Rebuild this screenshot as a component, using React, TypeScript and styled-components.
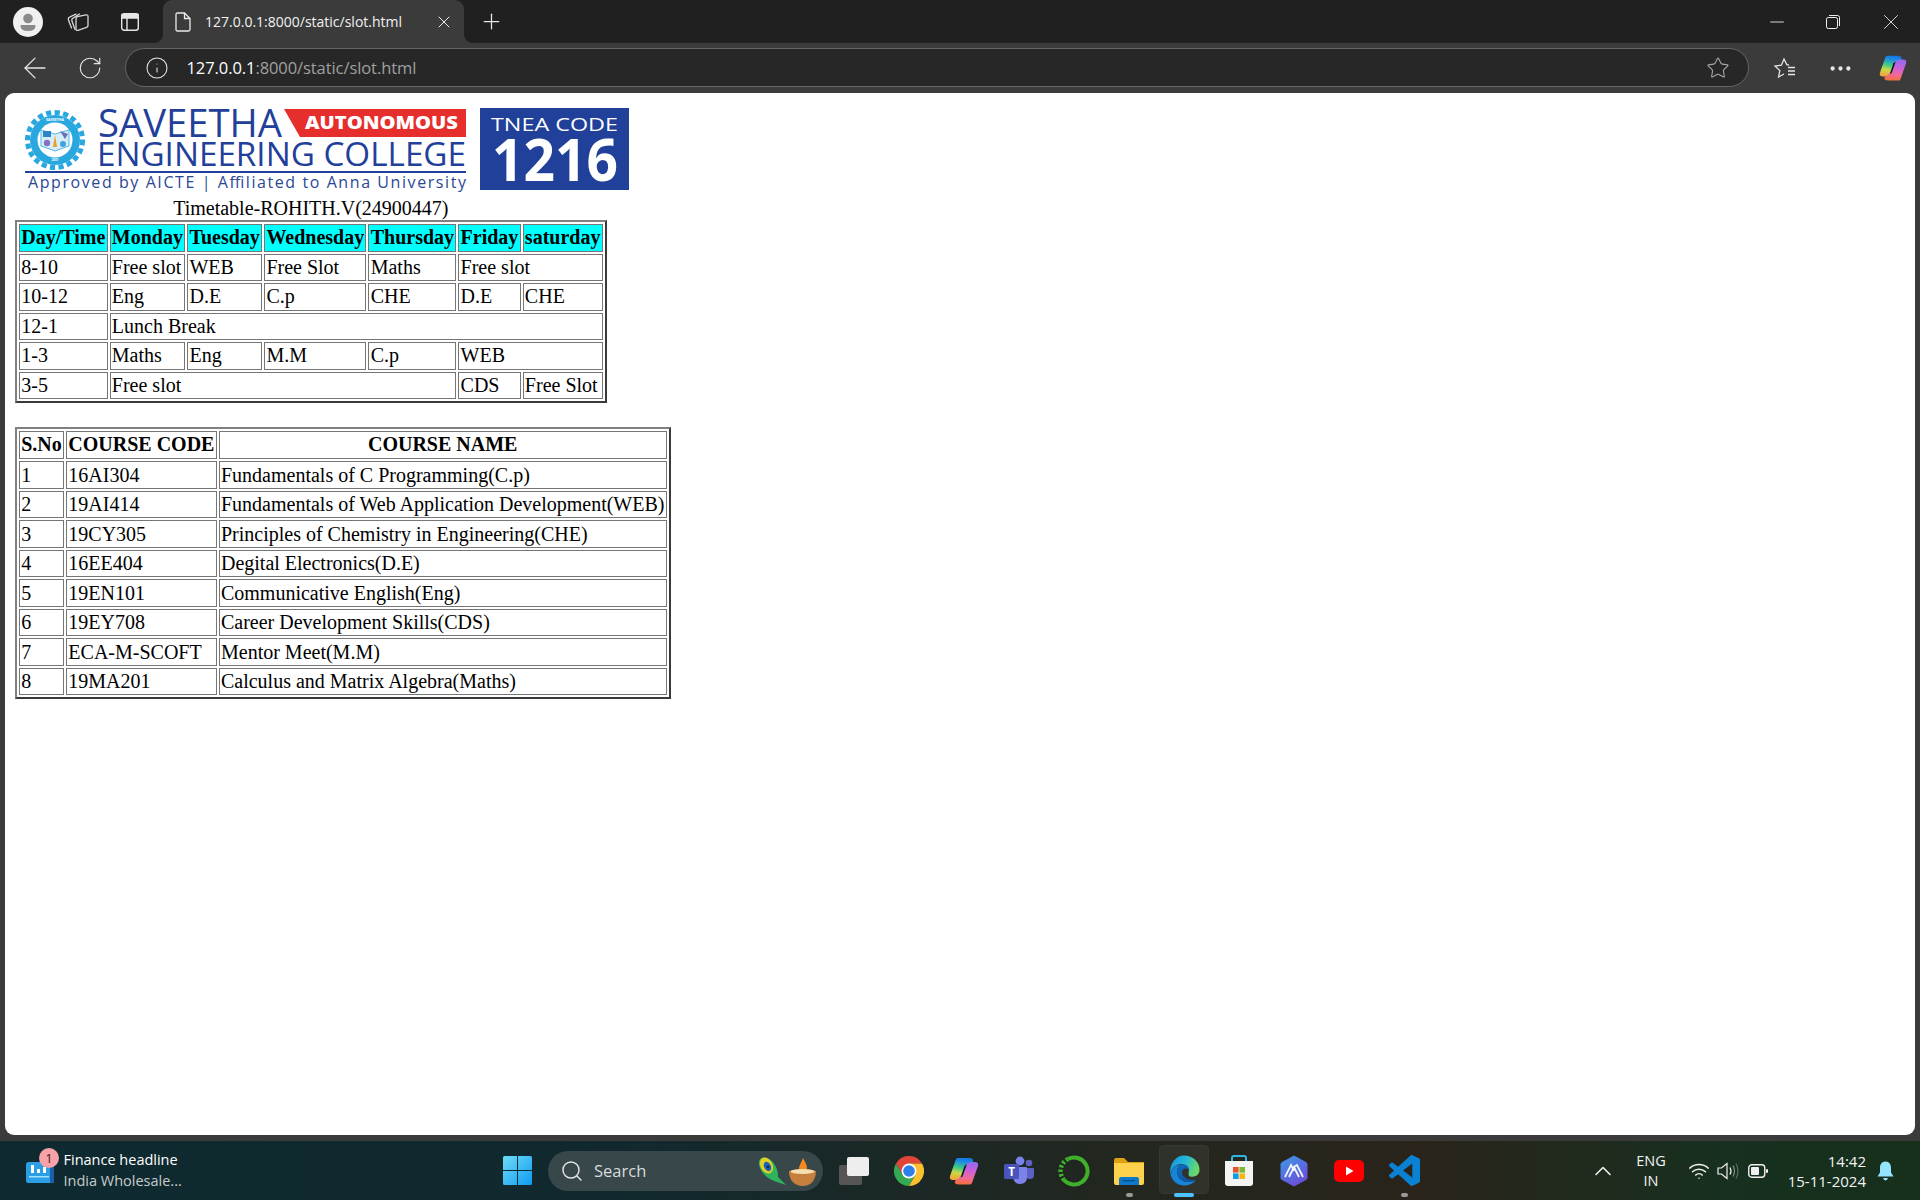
import React from "react";
import styled, { createGlobalStyle } from "styled-components";
import { ArrowLeft, ChevronUp, Info, MoreHorizontal, Minus, Plus, RotateCw, Search, Star, Wifi, X } from "lucide-react";

const Global = createGlobalStyle`
  html, body { margin: 0; padding: 0; background: #202020; overflow: hidden; }
  #root { width: 1920px; height: 1200px; }
`;

const Shell = styled.div`
  width: 1920px; height: 1200px; display: flex; flex-direction: column;
  font-family: "Open Sans", "Noto Sans", sans-serif; color: #fff;
`;
const TabStrip = styled.div`
  height: 43px; flex: none; display: flex; align-items: center; background: #202020; padding-left: 4px;
`;
const Slot = styled.div<{ $w: number; $ml?: number }>`
  width: ${(p) => p.$w}px; margin-left: ${(p) => p.$ml ?? 0}px; flex: none; height: 100%;
  display: flex; align-items: center; justify-content: center; position: relative;
`;
const Spacer = styled.div`flex: 1;`;
const Tab = styled.div`
  width: 301px; height: 43px; margin-left: 6px; flex: none; background: #3b3b3b; border-radius: 9px 9px 0 0;
  display: flex; align-items: center; padding: 0 10px 0 12px; box-sizing: border-box; position: relative;
  &::before, &::after { content: ""; position: absolute; bottom: 0; width: 8px; height: 8px; }
  &::before { left: -8px; background: radial-gradient(circle at 0 0, #202020 7.5px, #3b3b3b 8px); }
  &::after { right: -8px; background: radial-gradient(circle at 100% 0, #202020 7.5px, #3b3b3b 8px); }
`;
const TabTitle = styled.span`
  margin-left: 14px; flex: 1; font-size: 14px; color: #f2f2f2; white-space: nowrap;
`;
const Toolbar = styled.div`
  height: 50px; flex: none; display: flex; align-items: center; background: #3b3b3b; padding-left: 10px;
`;
const Address = styled.div`
  flex: 1; height: 39px; margin-left: 5px; margin-top: -1px; box-sizing: border-box; background: #272727; border: 1.5px solid #666;
  border-radius: 20px; display: flex; align-items: center; padding: 0 18px 0 19px;
`;
const Url = styled.span`
  margin-left: 17.5px; flex: 1; font-size: 16.5px; letter-spacing: -0.08px; color: #a0a0a0; white-space: nowrap;
`;
const UrlHost = styled.span`color: #fff;`;
const PageFrame = styled.div`
  flex: 1; min-height: 0; display: flex; background: #3b3b3b; padding: 0 5px 6px;
`;
const Page = styled.div`
  flex: 1; background: #fff; border-radius: 9px; overflow: hidden;
`;
const Doc = styled.div`
  zoom: 1.25; padding: 8px; color: #000; font-family: "Liberation Serif", "Times New Roman", serif; font-size: 16px;
`;
const LogoArt = styled.svg`display: block; width: 512px; height: 75.2px; overflow: visible;`;
const Table = styled.table<{ $mt?: number }>`
  border-collapse: separate; border-spacing: 2px; margin-top: ${(p) => p.$mt ?? 0}px;
  border-width: 1.6px; border-style: solid; border-color: #808080 #3a3a3a #3a3a3a #808080;
`;
const Caption = styled.caption`text-align: center;`;
const Head = styled.th<{ $fill?: boolean; $tall?: boolean }>`
  padding: 1px 1px ${(p) => (p.$tall ? 1.8 : 1)}px; border: 1px solid #767676;
  background: ${(p) => (p.$fill ? "#00ffff" : "transparent")};
  font-weight: 700; text-align: center;
`;
const Cell = styled.td`
  padding: 1px; border: 1px solid #767676;
`;
const Taskbar = styled.div`
  height: 59px; flex: none; display: flex; align-items: center;
  background: linear-gradient(90deg, #0e2a30 0%, #11292e 32%, #22271f 58%, #2a241b 74%, #17301f 90%, #16301c 100%);
`;
const WidgetArea = styled.div`
  width: 503px; flex: none; box-sizing: border-box; padding-left: 26px; display: flex; align-items: center;
`;
const WidgetIcon = styled.div`
  width: 28px; height: 21px; margin-top: 4px; position: relative; flex: none;
`;
const Badge = styled.span`
  position: absolute; left: 13px; top: -14px; width: 20px; height: 20px; border-radius: 50%; background: #f8a1a8;
  color: #3a1a1c; font-size: 13px; line-height: 20px; text-align: center;
`;
const WidgetText = styled.div`
  margin-left: 9.5px; display: flex; flex-direction: column; gap: 1px; font-size: 14.5px; line-height: 20px; white-space: nowrap;
`;
const WidgetSub = styled.span`color: #c6cccc;`;
const SearchPill = styled.div`
  width: 275px; height: 40px; margin-left: 16px; flex: none; box-sizing: border-box; border-radius: 20px; background: #37474a;
  display: flex; align-items: center; padding: 0 7px 0 12px; color: #d8dcdc; font-size: 16.5px;
`;
const SearchLabel = styled.span`margin-left: 10px; flex: 1;`;
const Apps = styled.div`
  margin-left: 3.5px; height: 100%; display: flex; flex: none;
`;
const AppSlot = styled.div<{ $active?: boolean; $open?: boolean }>`
  width: 55px; height: 100%; flex: none; display: flex; align-items: center; justify-content: center; position: relative;
  ${(p) => p.$active && `
    &::before { content: ""; position: absolute; left: 2.5px; right: 2.5px; top: 4px; bottom: 6px; background: rgba(255,255,255,.06);
      border-radius: 5px; border: 1px solid rgba(255,255,255,.03); }
    &::after { content: ""; position: absolute; left: 17.5px; width: 20px; height: 4px; bottom: 3px; border-radius: 2px; background: #4cc2ff; }
  `}
  ${(p) => p.$open && `
    &::after { content: ""; position: absolute; left: 24px; width: 7px; height: 4px; bottom: 3px; border-radius: 2px; background: #9a9a9a; }
  `}
  & > svg { position: relative; }
`;
const Tray = styled.div`
  flex: 1; height: 100%; display: flex; justify-content: flex-end; padding-right: 16px;
`;
const Lang = styled.div`
  width: 66px; flex: none; display: flex; flex-direction: column; align-items: center; justify-content: center;
  font-size: 14.5px; line-height: 20px; color: #f2f2f2;
`;
const Clock = styled.div`
  width: 93px; flex: none; display: flex; flex-direction: column; align-items: flex-end; justify-content: center;
  font-size: 15px; line-height: 20px; color: #f2f2f2; white-space: nowrap;
`;

const Logo = () => (
  <LogoArt viewBox="15 103 640 94">
    <g>
      <circle cx="55" cy="140" r="25" fill="#29a7df" />
      <circle cx="55" cy="140" r="27.5" fill="none" stroke="#29a7df" strokeWidth="5" strokeDasharray="5.2 3.4" />
      <circle cx="55" cy="140" r="17.5" fill="#fff" />
      <path d="M41 130 L55 134 L69 130 L69 146 L55 151 L41 146Z" fill="#d6eef9" stroke="#29a7df" strokeWidth=".8" />
      <rect x="43" y="131" width="8" height="6" fill="#2a84c8" />
      <circle cx="47" cy="143" r="3.2" fill="#8b6fc0" />
      <circle cx="63" cy="144" r="3" fill="#3fa2d8" />
      <path d="M55 135 L57 147 L53 147Z" fill="#e8a020" />
      <path d="M60 131 L68 134 L65 139Z" fill="#6a6fb8" />
      <text x="55" y="121.5" fontFamily="Open Sans" fontSize="3.6" fontWeight="700" fill="#fff" textAnchor="middle">SAVEETHA</text>
      <text x="55" y="161" fontFamily="Open Sans" fontSize="3" fontWeight="700" fill="#fff" textAnchor="middle">2001</text>
    </g>
    <text x="98" y="137" fontFamily="Open Sans" fontWeight="500" fontSize="39" fill="#22409a" textLength="184" lengthAdjust="spacingAndGlyphs">SAVEETHA</text>
    <polygon points="284,109 466,109 466,137 300,137" fill="#e62e2d" />
    <text x="305" y="129" fontFamily="Open Sans" fontWeight="800" fontSize="18" fill="#fff" textLength="153" lengthAdjust="spacingAndGlyphs">AUTONOMOUS</text>
    <text x="97" y="166" fontFamily="Open Sans" fontWeight="500" fontSize="32" fill="#22409a" textLength="369" lengthAdjust="spacingAndGlyphs">ENGINEERING COLLEGE</text>
    <rect x="25" y="171" width="441" height="2" fill="#22409a" />
    <text x="28" y="188" fontFamily="Open Sans" fontWeight="500" fontSize="16" fill="#2a4796" textLength="438" lengthAdjust="spacing">Approved by AICTE  |  Affiliated to Anna University</text>
    <rect x="480" y="108" width="149" height="82" fill="#20409a" />
    <text x="491" y="131" fontFamily="Open Sans" fontSize="18.5" fill="#fff" textLength="127" lengthAdjust="spacingAndGlyphs">TNEA CODE</text>
    <text x="492" y="181" fontFamily="Open Sans" fontWeight="700" fontSize="59" fill="#fff" textLength="126" lengthAdjust="spacingAndGlyphs">1216</text>
  </LogoArt>
);

const Chrome = () => (
  <svg width="30" height="30" viewBox="0 0 30 30">
    <path d="M2 7.5A15 15 0 0 1 28 7.5H15L8.5 18.75Z" fill="#e2443a" />
    <path d="M2 7.5A15 15 0 0 0 15 30L21.5 18.75H8.5Z" fill="#34a853" />
    <path d="M28 7.5A15 15 0 0 1 15 30L21.5 18.75L15 7.5Z" fill="#fbc02d" />
    <circle cx="15" cy="15" r="7.5" fill="#fff" />
    <circle cx="15" cy="15" r="5.8" fill="#2f7fe8" />
  </svg>
);
const CopilotMark = ({ id, size }: { id: string; size: number }) => (
  <svg width={size} height={size} viewBox="0 0 30 30">
    <defs>
      <linearGradient id={`${id}a`} x1="0.4" y1="1" x2="0.6" y2="0">
        <stop offset="0" stopColor="#f3a63a" /><stop offset=".3" stopColor="#c8d84a" /><stop offset=".55" stopColor="#3cc88a" /><stop offset=".85" stopColor="#1a8ae8" /><stop offset="1" stopColor="#1478e0" />
      </linearGradient>
      <linearGradient id={`${id}b`} x1="0.5" y1="1" x2="0.6" y2="0">
        <stop offset="0" stopColor="#f5703a" /><stop offset=".3" stopColor="#ee6a9e" /><stop offset=".65" stopColor="#c860dc" /><stop offset="1" stopColor="#8d6cf0" />
      </linearGradient>
    </defs>
    <path d="M9 2 H20 Q25 2 24 6 L17.5 11 L13.5 21 Q12.5 24 8 24 H4 Q0 24 1 20 L6 6 Q7 2 9 2Z" fill={`url(#${id}a)`} />
    <path d="M21 28.5 H10 Q5 28.5 6 25 L13 19.5 L17 9 Q18 6 22 6 H26 Q30 6 29 10 L24 24 Q23 28.5 21 28.5Z" fill={`url(#${id}b)`} />
    <path d="M15.5 10 L18 8 L13.5 20.5 L11.5 21.5Z" fill="#0e1a20" />
  </svg>
);
const Teams = () => (
  <svg width="30" height="30" viewBox="0 0 30 30">
    <circle cx="25" cy="7" r="3.3" fill="#5b62c4" />
    <path d="M20 12 H29 Q30 12 30 13 V19 Q30 23 26 23 Q23 23 21 21Z" fill="#5b62c4" />
    <circle cx="16" cy="5" r="4.4" fill="#7b83eb" />
    <path d="M9 11 H22 Q23 11 23 12 V21 Q23 28 16 28 Q10 28 9 21Z" fill="#7b83eb" />
    <rect x="0" y="8" width="15" height="15" rx="1.5" fill="#4b53bc" />
    <text x="7.5" y="19.5" fontFamily="Open Sans" fontSize="11.5" fontWeight="700" fill="#fff" textAnchor="middle">T</text>
  </svg>
);
const Ring = () => (
  <svg width="32" height="32" viewBox="0 0 32 32">
    <path d="M10 4 A13.5 13.5 0 1 1 6 25" fill="none" stroke="#3fb02b" strokeWidth="4" />
    <path d="M6 25 A13.5 13.5 0 0 1 10 4" fill="none" stroke="#3fb02b" strokeWidth="4.5" strokeDasharray="2.4 2" />
  </svg>
);
const Folder = () => (
  <svg width="30" height="30" viewBox="0 0 30 30">
    <path d="M0 5 Q0 2 2 2 H10 L14 6 H30 V12 H0Z" fill="#dfa20e" />
    <path d="M0 7 H30 V27 Q30 29 28 29 H2 Q0 29 0 27Z" fill="#ffd24d" />
    <path d="M5 29 V23 Q5 21 7 21 H23 Q25 21 25 23 V29Z" fill="#0f78c8" />
    <rect x="9" y="24" width="12" height="1.4" fill="#0a4f8c" />
  </svg>
);
const Edge = () => (
  <svg width="31" height="31" viewBox="0 0 31 31">
    <defs>
      <linearGradient id="edgeA" x1="0" y1="0" x2="1" y2="0.3"><stop offset="0" stopColor="#1a8fe0" /><stop offset=".55" stopColor="#23b8d8" /><stop offset="1" stopColor="#6ad96a" /></linearGradient>
      <linearGradient id="edgeB" x1="0" y1="0" x2="1" y2="1"><stop offset="0" stopColor="#0f6cc0" /><stop offset="1" stopColor="#0a4f96" /></linearGradient>
    </defs>
    <path d="M15 0.5 C24 0.5 30.5 7 30.5 15 C30.5 20 26 22.5 21 21.5 C19 21 19.5 17 20 15 C19 10 13 7.5 8 10 C3 12.5 1.5 17 2 21 C-1 12 5 0.5 15 0.5Z" fill="url(#edgeA)" />
    <path d="M2 21 C1.5 15 6 10 11.5 9.5 C8 12 7 17 9.5 22 C12 26.5 19 29 27 25 C24 29 19.5 30.5 15 30.5 C9 30.5 4 26.5 2 21Z" fill="#1684d8" />
    <path d="M11.5 9.5 C16 8.5 20 11 20 14.5 C17 12.5 13.5 13.5 13 17 C12.8 21 17 24 21 24.5 C24 24.8 26 24.5 27 25 C19 29 12 26.5 9.5 22 C7 17 8 12 11.5 9.5Z" fill="url(#edgeB)" />
  </svg>
);
const Store = () => (
  <svg width="30" height="32" viewBox="0 0 30 32">
    <path d="M8 6 V3 Q8 1 10 1 H20 Q22 1 22 3 V6" fill="none" stroke="#2ab7e8" strokeWidth="2" />
    <path d="M1 6 H29 V28 Q29 31 26 31 H4 Q1 31 1 28Z" fill="#f4f4f4" />
    <rect x="9" y="12" width="5.6" height="5.6" fill="#e8502e" />
    <rect x="15.4" y="12" width="5.6" height="5.6" fill="#7cb82f" />
    <rect x="9" y="18.4" width="5.6" height="5.6" fill="#0b9ce8" />
    <rect x="15.4" y="18.4" width="5.6" height="5.6" fill="#fab70a" />
  </svg>
);
const Hex = () => (
  <svg width="28" height="32" viewBox="0 0 28 32">
    <defs>
      <linearGradient id="hexA" x1="0" y1="0" x2="0.6" y2="1"><stop offset="0" stopColor="#3c9be8" /><stop offset="1" stopColor="#6a4fd8" /></linearGradient>
    </defs>
    <path d="M14 0.5 L26 7 Q27.5 8 27.5 9.5 V22.5 Q27.5 24 26 25 L14 31.5 L2 25 Q0.5 24 0.5 22.5 V9.5 Q0.5 8 2 7Z" fill="url(#hexA)" />
    <path d="M5 22 L11 10 L14 16 M9 22 L14 12 L19 22 M14 12 L17 10 L23 22" fill="none" stroke="#fff" strokeWidth="1.8" opacity=".92" />
  </svg>
);
const YouTube = () => (
  <svg width="30" height="22" viewBox="0 0 30 22">
    <rect width="30" height="22" rx="5" fill="#f00" />
    <path d="M12 6.5 L19.5 11 L12 15.5Z" fill="#fff" />
  </svg>
);
const VSCode = () => (
  <svg width="31" height="31" viewBox="0 0 24 24">
    <path fill="#0a82d4" d="M23.15 2.587L18.21.21a1.494 1.494 0 0 0-1.705.29l-9.46 8.63-4.12-3.128a.999.999 0 0 0-1.276.057L.327 7.261A1 1 0 0 0 .326 8.74L3.899 12 .326 15.26a1 1 0 0 0 .001 1.479L1.65 17.94a.999.999 0 0 0 1.276.057l4.12-3.128 9.46 8.63a1.492 1.492 0 0 0 1.704.29l4.942-2.377A1.5 1.5 0 0 0 24 20.06V3.939a1.5 1.5 0 0 0-.85-1.352zm-5.146 14.861L10.826 12l7.178-5.448v10.896z" />
  </svg>
);

const timetable: [string, ...[string, number?][]][] = [
  ["8-10", ["Free slot"], ["WEB"], ["Free Slot"], ["Maths"], ["Free slot", 2]],
  ["10-12", ["Eng"], ["D.E"], ["C.p"], ["CHE"], ["D.E"], ["CHE"]],
  ["12-1", ["Lunch Break", 6]],
  ["1-3", ["Maths"], ["Eng"], ["M.M"], ["C.p"], ["WEB", 2]],
  ["3-5", ["Free slot", 4], ["CDS"], ["Free Slot"]],
];
const courses = [
  ["16AI304", "Fundamentals of C Programming(C.p)"],
  ["19AI414", "Fundamentals of Web Application Development(WEB)"],
  ["19CY305", "Principles of Chemistry in Engineering(CHE)"],
  ["16EE404", "Degital Electronics(D.E)"],
  ["19EN101", "Communicative English(Eng)"],
  ["19EY708", "Career Development Skills(CDS)"],
  ["ECA-M-SCOFT", "Mentor Meet(M.M)"],
  ["19MA201", "Calculus and Matrix Algebra(Maths)"],
];
const days = ["Day/Time", "Monday", "Tuesday", "Wednesday", "Thursday", "Friday", "saturday"];

export default function App() {
  return (
    <Shell>
      <Global />
      <TabStrip>
        <Slot $w={48}>
          <svg width="30" height="30" viewBox="0 0 30 30">
            <ellipse cx="15" cy="15" rx="15" ry="15" fill="#f0f0f0" />
            <circle cx="15" cy="11.5" r="4.8" fill="#8a8a8a" />
            <path d="M7.5 18 H22.5 Q23 24 15 24 Q7 24 7.5 18Z" fill="#8a8a8a" />
          </svg>
        </Slot>
        <Slot $w={51}>
          <svg width="22" height="20" viewBox="0 0 22 20" fill="none" stroke="#d8d8d8" strokeWidth="1.3" strokeLinecap="round">
            <path d="M4.5 16 L1.3 7.5 Q1 5.5 3 4.8 L9 2.2" />
            <path d="M8 17.5 L4.8 8.5 Q4.5 6.5 6.5 5.8 L12.5 2" />
            <path d="M9 6.5 Q9 5 10.5 4.6 L19 2.8 Q21 2.6 21 4.5 V13.5 Q21 15 19.5 15.4 L11 18.4 Q9 18.8 9 17Z" />
          </svg>
        </Slot>
        <Slot $w={54}>
          <svg width="18" height="18" viewBox="0 0 18 18" fill="none" stroke="#e6e6e6" strokeWidth="1.4">
            <rect x="0.7" y="0.7" width="16.6" height="16.6" rx="2.5" />
            <path d="M1 1.5 H17 V5 H1Z" fill="#e6e6e6" />
            <path d="M6 5 V17" />
          </svg>
        </Slot>
        <Tab>
          <svg width="16" height="20" viewBox="0 0 16 20" fill="none" stroke="#ececec" strokeWidth="1.3">
            <path d="M2.5 1 H9.5 L15 6.5 V17.5 Q15 19 13.5 19 H2.5 Q1 19 1 17.5 V2.5 Q1 1 2.5 1Z" />
            <path d="M9.5 1 V6.5 H15" />
          </svg>
          <TabTitle>127.0.0.1:8000/static/slot.html</TabTitle>
          <X size={20} strokeWidth={1.2} color="#f0f0f0" />
        </Tab>
        <Slot $w={42} $ml={6}><Plus size={25} strokeWidth={1.2} color="#e8e8e8" /></Slot>
        <Spacer />
        <Slot $w={56}><Minus size={22} strokeWidth={0.95} color="#f0f0f0" /></Slot>
        <Slot $w={56}>
          <svg width="14" height="14" viewBox="0 0 14 14" fill="none" stroke="#f0f0f0" strokeWidth="1">
            <rect x="0.5" y="2.5" width="11" height="11" rx="1.8" />
            <path d="M3 0.5 H11.5 Q13.5 0.5 13.5 2.5 V11" />
          </svg>
        </Slot>
        <Slot $w={59}><X size={26} strokeWidth={0.8} color="#f0f0f0" /></Slot>
      </TabStrip>
      <Toolbar>
        <Slot $w={50}><ArrowLeft size={34} strokeWidth={0.9} color="#e6e6e6" /></Slot>
        <Slot $w={60}><RotateCw size={26} strokeWidth={1.05} color="#e6e6e6" /></Slot>
        <Address>
          <Info size={24} strokeWidth={1.05} color="#e6e6e6" />
          <Url><UrlHost>127.0.0.1</UrlHost>:8000/static/slot.html</Url>
          <Star size={24} strokeWidth={1.05} color="#a8a8a8" />
        </Address>
        <Slot $w={72}>
          <svg width="22" height="22" viewBox="0 0 22 22" fill="none" stroke="#e6e6e6" strokeWidth="1.3">
            <path d="M10 17 L4.6 20 L5.8 13.6 L1 9 L7.4 8.2 L10 2 L12.8 7.6 L15 8" />
            <path d="M14 10.5 H21 M14 14 H21 M14 17.5 H21" />
          </svg>
        </Slot>
        <Slot $w={38}><MoreHorizontal size={27} strokeWidth={1.8} color="#e6e6e6" /></Slot>
        <Slot $w={55} $ml={6}><CopilotMark id="cpTop" size={28} /></Slot>
      </Toolbar>
      <PageFrame>
        <Page>
          <Doc>
            <Logo />
            <Table>
              <Caption>Timetable-ROHITH.V(24900447)</Caption>
              <tbody>
                <tr>{days.map((d) => <Head key={d} $fill>{d}</Head>)}</tr>
                {timetable.map(([time, ...cells]) => (
                  <tr key={time}>
                    <Cell>{time}</Cell>
                    {cells.map(([text, span], i) => <Cell key={i} colSpan={span}>{text}</Cell>)}
                  </tr>
                ))}
              </tbody>
            </Table>
            <Table $mt={19}>
              <tbody>
                <tr><Head $tall>S.No</Head><Head $tall>COURSE CODE</Head><Head $tall>COURSE NAME</Head></tr>
                {courses.map(([code, name], i) => (
                  <tr key={code}><Cell>{i + 1}</Cell><Cell>{code}</Cell><Cell>{name}</Cell></tr>
                ))}
              </tbody>
            </Table>
          </Doc>
        </Page>
      </PageFrame>
      <Taskbar>
        <WidgetArea>
          <WidgetIcon>
            <svg width="28" height="21" viewBox="0 0 28 21">
              <rect width="28" height="21" rx="2.5" fill="#2a9fe6" />
              <rect x="24" y="4" width="4" height="17" fill="#1a5fa8" />
              <rect x="5" y="3" width="3" height="8" fill="#fff" />
              <rect x="11" y="7" width="3" height="4" fill="#fff" />
              <rect x="17" y="5" width="3" height="6" fill="#fff" />
              <rect x="3" y="14" width="20" height="1.5" fill="#9fe0ff" />
            </svg>
            <Badge>1</Badge>
          </WidgetIcon>
          <WidgetText>
            <span>Finance headline</span>
            <WidgetSub>India Wholesale...</WidgetSub>
          </WidgetText>
        </WidgetArea>
        <svg width="29" height="29" viewBox="0 0 29 29">
          <defs>
            <linearGradient id="winA" x1="0" y1="0" x2="1" y2="1"><stop offset="0" stopColor="#6fdcf8" /><stop offset="1" stopColor="#0e9bf0" /></linearGradient>
          </defs>
          <path d="M0 1.5 Q0 0 1.5 0 H14 V14 H0Z M15 0 H27.5 Q29 0 29 1.5 V14 H15Z M0 15 H14 V29 H1.5 Q0 29 0 27.5Z M15 15 H29 V27.5 Q29 29 27.5 29 H15Z" fill="url(#winA)" />
        </svg>
        <SearchPill>
          <Search size={24} strokeWidth={1.45} color="#e4e4e4" />
          <SearchLabel>Search</SearchLabel>
          <svg width="58" height="30" viewBox="0 0 58 30">
            <path d="M2 3 C-2 9 5 21 16 25 L28 29 L20 21 C21 11 11 -3 2 3Z" fill="#2fb35a" />
            <ellipse cx="8.5" cy="9.5" rx="6" ry="8.5" transform="rotate(-28 8.5 9.5)" fill="#e6cf24" />
            <ellipse cx="9.5" cy="10.5" rx="3.4" ry="5" transform="rotate(-28 9.5 10.5)" fill="#1b62b5" />
            <circle cx="10" cy="11" r="1.6" fill="#0c2c60" />
            <path d="M45 2 C48 8 50 10 48.5 15 H41.5 C40 10 43 8 45 2Z" fill="#f58a1f" />
            <path d="M31 15 Q45 11 58 15 C58 25 52 30 45 30 C37 30 31 25 31 15Z" fill="#c77f3d" />
            <ellipse cx="44.5" cy="15.5" rx="12" ry="2.6" fill="#f5deb0" />
          </svg>
        </SearchPill>
        <Apps>
          <AppSlot>
            <svg width="30" height="30" viewBox="0 0 30 30">
              <rect x="0" y="9" width="23" height="20" rx="2" fill="#555" />
              <rect x="8" y="1" width="22" height="19" rx="2" fill="#eeeeee" />
            </svg>
          </AppSlot>
          <AppSlot><Chrome /></AppSlot>
          <AppSlot><CopilotMark id="cpBar" size={30} /></AppSlot>
          <AppSlot><Teams /></AppSlot>
          <AppSlot><Ring /></AppSlot>
          <AppSlot $open><Folder /></AppSlot>
          <AppSlot $active><Edge /></AppSlot>
          <AppSlot><Store /></AppSlot>
          <AppSlot><Hex /></AppSlot>
          <AppSlot><YouTube /></AppSlot>
          <AppSlot $open><VSCode /></AppSlot>
        </Apps>
        <Tray>
          <Slot $w={30}><ChevronUp size={28} strokeWidth={1.4} color="#f0f0f0" /></Slot>
          <Lang><span>ENG</span><span>IN</span></Lang>
          <Slot $w={29}><Wifi size={22} strokeWidth={1.7} color="#f0f0f0" /></Slot>
          <Slot $w={30}>
            <svg width="22" height="18" viewBox="0 0 22 18" fill="none" strokeWidth="1.2">
              <path d="M1 6 H4.5 L10 1.5 V16.5 L4.5 12 H1Z" stroke="#f0f0f0" />
              <path d="M13 5.5 Q15 9 13 12.5" stroke="#f0f0f0" />
              <path d="M16 3.5 Q19 9 16 14.5" stroke="#8a8a8a" />
              <path d="M19 1.5 Q23 9 19 16.5" stroke="#5e6a60" />
            </svg>
          </Slot>
          <Slot $w={30}>
            <svg width="20" height="14" viewBox="0 0 20 14" fill="none">
              <rect x="0.75" y="0.75" width="16" height="12.5" rx="3" stroke="#f0f0f0" strokeWidth="1.4" />
              <rect x="3" y="3" width="8" height="8" rx="1" fill="#f0f0f0" />
              <rect x="18" y="5" width="2" height="4" rx="1" fill="#f0f0f0" />
            </svg>
          </Slot>
          <Clock><span>14:42</span><span>15-11-2024</span></Clock>
          <Slot $w={38}>
            <svg width="17" height="20" viewBox="0 0 17 20">
              <path d="M8.5 0.5 C12.5 0.5 14 3.5 14 7 V11.5 L16.5 15.5 H0.5 L3 11.5 V7 C3 3.5 4.5 0.5 8.5 0.5Z" fill="#93e4ff" />
              <path d="M6 17 H11 Q10 19.5 8.5 19.5 Q7 19.5 6 17Z" fill="#93e4ff" />
            </svg>
          </Slot>
        </Tray>
      </Taskbar>
    </Shell>
  );
}
